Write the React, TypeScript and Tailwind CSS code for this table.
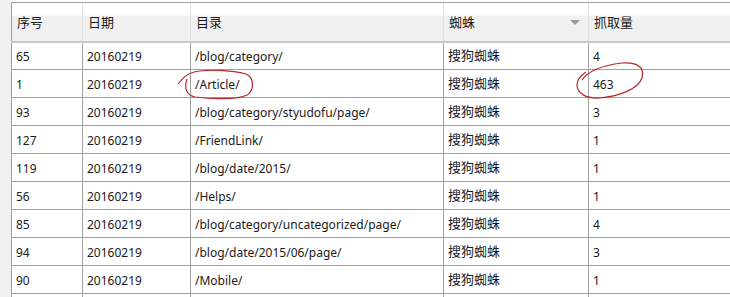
const rows = [
  ['65', '20160219', '/blog/category/', '搜狗蜘蛛', '4'],
  ['1', '20160219', '/Article/', '搜狗蜘蛛', '463'],
  ['93', '20160219', '/blog/category/styudofu/page/', '搜狗蜘蛛', '3'],
  ['127', '20160219', '/FriendLink/', '搜狗蜘蛛', '1'],
  ['119', '20160219', '/blog/date/2015/', '搜狗蜘蛛', '1'],
  ['56', '20160219', '/Helps/', '搜狗蜘蛛', '1'],
  ['85', '20160219', '/blog/category/uncategorized/page/', '搜狗蜘蛛', '4'],
  ['94', '20160219', '/blog/date/2015/06/page/', '搜狗蜘蛛', '3'],
  ['90', '20160219', '/Mobile/', '搜狗蜘蛛', '1'],
  ['', '', '', '', ''],
];

const widths = ['w-[71px]', 'w-[108px]', 'w-[253px]', 'w-[145px]', 'w-[160px]'];
const headers = ['序号', '日期', '目录', '蜘蛛', '抓取量'];

// CJK cells get a slightly larger size, like the original grid
const isCjk = (s: string) => /[\u4e00-\u9fff]/.test(s);

export default function App() {
  return (
    <div
      className="relative w-[730px] h-[297px] overflow-hidden bg-white text-[12px] text-[#1a1a1a]"
      style={{ fontFamily: '"Noto Sans", "Noto Sans CJK SC", sans-serif' }}
    >
      <div className="flex h-full">
        <div className="w-[11px] shrink-0 bg-[#f0f0f0]" />
        <div className="pt-[2px]">
          <table className="border-collapse table-fixed w-[737px]">
            <thead>
              <tr className="h-[39px] bg-gradient-to-b from-white from-30% to-[#f1f1f1] to-35%">
                {headers.map((h, i) => (
                  <th
                    key={h}
                    className={`${widths[i]} relative text-left font-normal text-[13px] leading-[16px] pl-[5px] border-t border-t-[#a0a0a0] border-b-2 border-b-[#c8c8c8] ${i === 0 ? 'border-l border-l-[#a0a0a0]' : 'border-l border-l-[#e2e2e2]'}`}
                  >
                    {h}
                    {i === 3 && (
                      <span className="absolute right-[8px] top-[17px] w-0 h-0 border-l-[5px] border-r-[5px] border-t-[5px] border-l-transparent border-r-transparent border-t-[#9a9a9a]" />
                    )}
                  </th>
                ))}
              </tr>
            </thead>
            <tbody>
              {rows.map((r, ri) => (
                <tr key={ri} className="h-[28px]">
                  {r.map((c, ci) => (
                    <td
                      key={ci}
                      className={`border border-[#a0a0a0] pl-[4px] leading-[16px] ${isCjk(c) ? 'text-[13px] pb-[1px]' : 'pt-[2px]'}`}
                    >
                      {c}
                    </td>
                  ))}
                </tr>
              ))}
            </tbody>
          </table>
        </div>
      </div>

      {/* red hand-drawn marks */}
      <svg className="absolute left-0 top-0" width="730" height="297" viewBox="0 0 730 297" fill="none">
        <path
          d="M178 84 C182 79 186 74 194 72 C206 69 232 70 246 74 C255 78 254 91 247 95 C237 100 210 99 195 97 C186 95 184 88 187 79"
          stroke="#b8262c"
          strokeWidth="1.2"
        />
        <path
          d="M582 80 C589 70 605 65 622 63 C637 62 645 67 642 78 C638 89 620 96 600 98 C586 99 577 93 577 85 C577 80 580 76 586 72"
          stroke="#b8262c"
          strokeWidth="1.2"
        />
      </svg>
    </div>
  );
}
